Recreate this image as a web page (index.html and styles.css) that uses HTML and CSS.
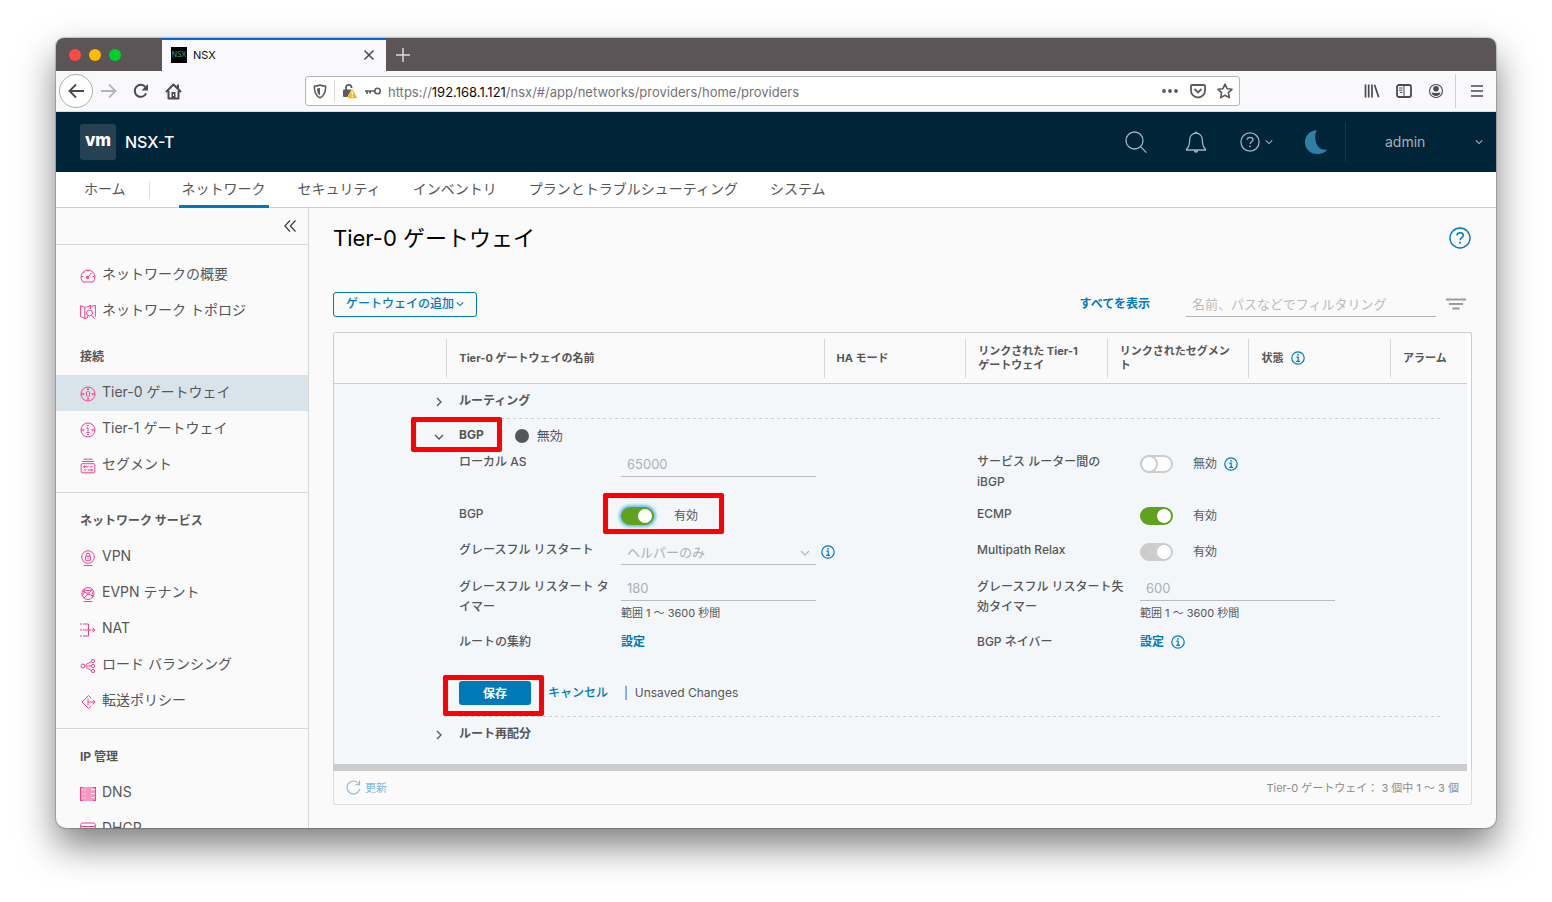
FILE: index.html
```html
<!DOCTYPE html>
<html lang="ja">
<head>
<meta charset="utf-8">
<title>NSX</title>
<meta name="viewport" content="width=device-width, initial-scale=1">
<link rel="stylesheet" href="styles.css">
</head>
<body>
<svg class="defs" width="0" height="0" aria-hidden="true">
  <symbol id="chev-down" viewBox="0 0 10 10"><path d="M1 3l4 4 4-4" fill="none" stroke="currentColor" stroke-width="1.3"/></symbol>
  <symbol id="chev-right" viewBox="0 0 10 10"><path d="M3 1l4 4-4 4" fill="none" stroke="currentColor" stroke-width="1.3"/></symbol>
  <symbol id="info" viewBox="0 0 14 14"><g fill="none" stroke="currentColor" stroke-width="1.2"><circle cx="7" cy="7" r="6.2"/><path d="M5.4 6.2h1.8v4M5.2 10.4h3.8"/></g><circle cx="7" cy="3.8" r=".9" fill="currentColor"/></symbol>
  <symbol id="question" viewBox="0 0 22 22"><g fill="none" stroke="currentColor" stroke-width="1.4"><circle cx="11" cy="11" r="10"/><path d="M7.8 8.4c.2-1.6 1.5-2.6 3.3-2.6 1.9 0 3.2 1.1 3.2 2.6 0 2.2-3.2 2.3-3.2 4.8"/></g><circle cx="11" cy="15.8" r="1" fill="currentColor"/></symbol>
</svg>

<div class="window">
  <div class="titlebar">
    <div class="lights"><i class="light red"></i><i class="light yellow"></i><i class="light green"></i></div>
    <div class="browser-tab">
      <span class="favicon">NSX</span>
      <span class="tab-name">NSX</span>
      <button class="plain" aria-label="Close tab"><svg width="12" height="12" viewBox="0 0 12 12"><path d="M1.500 1.500l9 9M10.500 1.500l-9 9" stroke="#4a4a4f" stroke-width="1.500" fill="none"/></svg></button>
    </div>
    <button class="plain new-tab" aria-label="New tab"><svg width="14" height="14" viewBox="0 0 14 14"><path d="M7 0v14M0 7h14" stroke="#dcdadb" stroke-width="1.500"/></svg></button>
  </div>

  <div class="toolbar">
    <button class="plain back" aria-label="Back"><svg width="18" height="16" viewBox="0 0 18 16"><path d="M9 1.500L2.500 8 9 14.500M2.500 8H17" fill="none" stroke="#4a4a4f" stroke-width="1.800"/></svg></button>
    <button class="plain nav-btn" aria-label="Forward"><svg width="18" height="16" viewBox="0 0 18 16"><path d="M9 1.500l6.500 6.500L9 14.500M15.500 8H1" fill="none" stroke="#b5b5b8" stroke-width="1.800"/></svg></button>
    <button class="plain nav-btn" aria-label="Reload"><svg width="18" height="16" viewBox="0 0 18 16"><path d="M14.200 10.400A6 6 0 1 1 13.400 4" fill="none" stroke="#4a4a4f" stroke-width="2"/><path d="M16 1v6.500H9.500z" fill="#4a4a4f"/></svg></button>
    <button class="plain nav-btn" aria-label="Home"><svg width="17" height="17" viewBox="0 0 17 17"><g fill="none" stroke="#4a4a4f" stroke-width="2" stroke-linejoin="round"><path d="M1 9l7.500-7.500L16 9M3.500 8v7.500h10V8"/></g><path d="M6.500 9h4v6.500h-4z" fill="#4a4a4f"/><path d="M12 1.500h2V6l-2-2z" fill="#4a4a4f"/><path d="M8 11h1v2H8z" fill="#fff"/></svg></button>
    <div class="urlbar">
      <span class="shield"><svg width="14" height="15" viewBox="0 0 14 15"><path d="M7 1C5 2 3 2.200 1.300 2.200c0 5.500 1 9.500 5.700 11.500 4.700-2 5.700-6 5.700-11.500C11 2.200 9 2 7 1z" fill="none" stroke="#5b5b5f" stroke-width="1.500"/><path d="M7 4v7.500C4.700 10 4 8 3.900 4.600z" fill="#5b5b5f"/></svg></span>
      <svg width="16" height="16" viewBox="0 0 16 16"><path d="M4 8V4.500a2.800 2.800 0 0 1 5.500-.5v1" fill="none" stroke="#5b5b5f" stroke-width="1.800"/><rect x="1" y="6.500" width="9" height="7.500" rx="1" fill="#5b5b5f"/><path d="M10.300 5.600l4.900 8.900a.6.6 0 0 1-.5.900H5.900a.6.6 0 0 1-.5-.9z" fill="#ffb000" stroke="#fff" stroke-width=".6"/><path d="M10.300 8.500v3.200M10.300 12.600v1.400" stroke="#fff" stroke-width="1.300"/></svg>
      <svg width="16" height="10" viewBox="0 0 16 10"><circle cx="12.500" cy="5" r="2.700" fill="none" stroke="#5b5b5f" stroke-width="1.600"/><path d="M0 5h9.500M2 5v3M5 5v2.600" stroke="#5b5b5f" stroke-width="1.700" fill="none"/></svg>
      <span class="url">https://<b>192.168.1.121</b>/nsx/#/app/networks/providers/home/providers</span>
      <svg width="18" height="16" viewBox="0 0 18 16" fill="#5b5b5f"><circle cx="3" cy="8" r="1.900"/><circle cx="9" cy="8" r="1.900"/><circle cx="15" cy="8" r="1.900"/></svg>
      <svg width="16" height="16" viewBox="0 0 16 16" fill="none" stroke="#5b5b5f" stroke-width="1.800"><path d="M2 2h12a1 1 0 0 1 1 1v4.500a7 7 0 0 1-14 0V3a1 1 0 0 1 1-1z"/><path d="M4.500 6L8 9.500 11.500 6"/></svg>
      <svg width="16" height="16" viewBox="0 0 16 16" fill="none" stroke="#5b5b5f" stroke-width="1.600" stroke-linejoin="round"><path d="M8 1.200l2.100 4.500 4.900.6-3.600 3.400.9 4.900L8 12.200l-4.300 2.400.9-4.900L1 6.300l4.900-.6z"/></svg>
    </div>
    <div class="chrome-tools">
      <button class="plain" aria-label="Library"><svg width="16" height="16" viewBox="0 0 16 16"><path d="M1.500 1.500v13M4.700 1.500v13M8 1.500v13M10.500 1.800l4.200 12.500" fill="none" stroke="#4a4a4f" stroke-width="1.700"/></svg></button>
      <button class="plain" aria-label="Sidebar"><svg width="16" height="16" viewBox="0 0 16 16"><rect x="1" y="2" width="14" height="12" rx="2" fill="none" stroke="#4a4a4f" stroke-width="1.800"/><path d="M8 2v12M3 5h3.500M3 7.200h3.500M4 9.400h2.500" stroke="#4a4a4f" fill="none"/></svg></button>
      <button class="plain" aria-label="Account"><svg width="16" height="16" viewBox="0 0 16 16"><circle cx="8" cy="8" r="6.500" fill="none" stroke="#4a4a4f" stroke-width="1.100"/><circle cx="8" cy="5.800" r="2.800" fill="#4a4a4f"/><path d="M3.500 9.200c1.500 1 7.500 1 9 0-.3 2.500-2.300 3.800-4.500 3.800s-4.200-1.300-4.500-3.800z" fill="#4a4a4f"/></svg></button>
    </div>
    <button class="plain menu-btn" aria-label="Menu"><svg width="12" height="12" viewBox="0 0 12 12"><path d="M0 1h12M0 6h12M0 11h12" stroke="#4a4a4f" stroke-width="1.600"/></svg></button>
  </div>

  <header class="app-header">
    <span class="vm-logo">vm</span>
    <span class="product">NSX-T</span>
    <div class="header-actions">
      <button class="plain" aria-label="検索"><svg width="24" height="24" viewBox="0 0 24 24" fill="none" stroke="currentColor" stroke-width="1.300"><circle cx="10.500" cy="10.500" r="8.500"/><path d="M16.600 16.600l5.800 6"/></svg></button>
      <button class="plain" aria-label="通知"><svg width="22" height="24" viewBox="0 0 22 24"><path d="M11 3.200c-3.800 0-6.300 2.900-6.300 6.300 0 4.500-.8 7.500-3.200 9.800v.7h19v-.7c-2.400-2.300-3.200-5.300-3.200-9.800 0-3.400-2.500-6.300-6.300-6.300z" fill="none" stroke="currentColor" stroke-width="1.300"/><path d="M9.500 3a1.500 1.500 0 0 1 3 0M8.800 20.500a2.200 2.200 0 0 0 4.400 0z" fill="currentColor"/></svg></button>
      <button class="plain help" aria-label="ヘルプ"><svg width="20" height="20"><use href="#question"/></svg><svg width="8" height="8"><use href="#chev-down"/></svg></button>
      <button class="plain" aria-label="ダーク モード"><svg width="24" height="24" viewBox="0 0 24 24"><path d="M12.800.1C6 .6 1 5.700 1 12.200 1 18.800 6.200 24 13 24c4.400 0 8.300-1.500 10.300-4.500-3.500.7-7-.3-9.300-3.300C10.800 12 10.400 5 12.800.1z" fill="#2e7fa3"/></svg></button>
      <button class="plain user">admin<svg width="8" height="8"><use href="#chev-down"/></svg></button>
    </div>
  </header>

  <nav class="main-tabs" aria-label="メイン">
    <a href="#" class="home">ホーム</a>
    <a href="#" class="active">ネットワーク</a>
    <a href="#">セキュリティ</a>
    <a href="#">インベントリ</a>
    <a href="#">プランとトラブルシューティング</a>
    <a href="#">システム</a>
  </nav>

  <div class="workspace">
    <aside class="sidebar">
      <div class="collapse"><button class="plain" aria-label="折りたたむ"><svg width="12" height="12" viewBox="0 0 12 12"><path d="M6 .5L.8 6 6 11.500M11.500.5L6.300 6l5.200 5.500" fill="none" stroke="#333" stroke-width="1.100"/></svg></button></div>
      <div class="group top">
        <a href="#"><svg viewBox="0 0 16 16"><path d="M3 14a7 7 0 1 1 10 0zM8 2v1.800M1.500 8.500h1.800M12.700 8.500h1.800M3.400 4l1 1"/><path d="M7.500 9.500l4-4.500"/><circle cx="7.600" cy="9.400" r="1.200" class="solid"/></svg>ネットワークの概要</a>
        <a href="#"><svg viewBox="0 0 16 16"><path d="M.6 1.500l4.200 2v11l-4.200-2zM4.800 3.500L6 2.500M10.500 1.500l-4 1.500M10.500 1.500l1.500.8 3.400-1v11.500M10.500 1.500V5M4.800 14.500L8 13.500"/><circle cx="9.500" cy="9" r="3"/><path d="M11.600 11.300l3 3.500M7 12.500l2-1.500"/></svg>ネットワーク トポロジ</a>
      </div>
      <div class="group">
        <h2>接続</h2>
        <a href="#" class="current"><svg viewBox="0 0 16 16"><circle cx="8" cy="8" r="7"/><rect x="6.400" y="5.600" width="3.200" height="4.800" rx="1"/><path d="M6.800 2.800L8 4l1.200-1.200M6.800 13.200L8 12l1.200 1.200M3 6.800L4.200 8 3 9.200M13 6.800L11.800 8 13 9.200M1 8h3M12 8h3M8 1.500V4M8 12v2.500"/></svg>Tier-0 ゲートウェイ</a>
        <a href="#"><svg viewBox="0 0 16 16"><circle cx="8" cy="8" r="7"/><path d="M6.600 6.500L8 5.600v5M6.500 10.600h3M6.800 2.800L8 4l1.200-1.200M6.800 13.200L8 12l1.200 1.200M3 6.800L4.200 8 3 9.200M13 6.800L11.800 8 13 9.200M1 8h3M12 8h3"/></svg>Tier-1 ゲートウェイ</a>
        <a href="#"><svg viewBox="0 0 16 16"><path d="M3.500 1.200h9M2 3.500h12"/><rect x="1.200" y="5.700" width="13.600" height="9.100" rx="1"/><path d="M3.500 8.700h5M5.200 7.300L3.600 8.700l1.600 1.400M10 8.700h2.500M7.500 12h5M10.900 10.600l1.600 1.400-1.600 1.400M3.500 12H6"/></svg>セグメント</a>
      </div>
      <div class="group">
        <h2>ネットワーク サービス</h2>
        <a href="#"><svg viewBox="0 0 16 16"><circle cx="8" cy="7" r="6.300"/><rect x="5.500" y="6.300" width="5" height="4" rx=".5"/><path d="M6.300 6V4.800a1.700 1.700 0 0 1 3.400 0V6M8 7.500v1.500M3.500 15.500h9"/></svg>VPN</a>
        <a href="#"><svg viewBox="0 0 16 16"><circle cx="8" cy="7.500" r="6"/><circle cx="8" cy="7.800" r="1"/><path d="M2.500 5l4.800 2.300M8.800 7L12.500 3.500M7.500 8.700L4 12M8.800 8.300l4.500 1.900M4 3.500c2 1.600 6 1.600 8 0M4 3.500c.6 3-.5 5-1.500 6M13.500 5c-1.700 2-1.500 5-1 7M3.500 15.500h9"/></svg>EVPN テナント</a>
        <a href="#"><svg viewBox="0 0 16 16"><path d="M0 2h2M3 2h5.500v12H3M2 14H0M0 8h2M3 8h12M12.500 5.800L15 8l-2.500 2.200"/></svg>NAT</a>
        <a href="#"><svg viewBox="0 0 16 16"><circle cx="3" cy="8" r="2"/><circle cx="13" cy="3" r="1.600"/><circle cx="13" cy="8" r="1.600"/><circle cx="13" cy="13" r="1.600"/><path d="M5 8h6M6 6.500L11.500 3.500M6 9.500l5.500 3"/></svg>ロード バランシング</a>
        <a href="#"><svg viewBox="0 0 16 16"><path d="M11 4L8.500 1.500 2 8l6.500 6.500L11 12M8 4.500v7M8 8h7M12.700 5.600L15.200 8l-2.500 2.400"/></svg>転送ポリシー</a>
      </div>
      <div class="group">
        <h2>IP 管理</h2>
        <a href="#"><svg viewBox="0 0 16 16"><path d="M0 1h16v14H0z" class="tint"/><path d="M.5 1v14M15.500 1v14M0 1.500h3M13 1.500h3M0 14.500h3M13 14.500h3"/><path d="M2 4h1M2 8h1M2 12h1M4.500 4h1M4.500 8h1M4.500 12h1M11 3.500h4M11 7.500h4M11 11.500h4" class="gap"/></svg>DNS</a>
        <a href="#"><svg viewBox="0 0 16 16"><rect x=".7" y="1" width="14.600" height="13.500" rx="2"/><path d="M1 4.500h14M3.500 7h8M3.500 10h8"/></svg>DHCP</a>
      </div>
    </aside>

    <main class="content">
      <div class="page-head">
        <h1>Tier-0 ゲートウェイ</h1>
        <button class="plain page-help" aria-label="ヘルプ"><svg width="22" height="22"><use href="#question"/></svg></button>
      </div>

      <div class="actions">
        <button class="add-btn">ゲートウェイの追加<svg width="8" height="8"><use href="#chev-down"/></svg></button>
        <a href="#" class="show-all">すべてを表示</a>
        <input class="filter" type="text" aria-label="フィルタ" placeholder="名前、パスなどでフィルタリング">
        <button class="plain" aria-label="フィルタ オプション"><svg width="22" height="12" viewBox="0 0 22 12"><path d="M1 1.500h20M4 6h14M7.500 10.500h7" stroke="#9a9a9a" stroke-width="1.800"/></svg></button>
      </div>

      <div class="grid-panel">
        <div class="grid-scroll">
          <table>
            <colgroup><col class="c-exp"><col class="c-name"><col class="c-std"><col class="c-std"><col class="c-std"><col class="c-std"><col></colgroup>
            <thead>
              <tr>
                <th aria-label="展開"></th>
                <th>Tier-0 ゲートウェイの名前</th>
                <th>HA モード</th>
                <th>リンクされた Tier-1<br>ゲートウェイ</th>
                <th>リンクされたセグメント</th>
                <th><span class="with-icon">状態<svg class="blue" width="14" height="14"><use href="#info"/></svg></span></th>
                <th>アラーム</th>
              </tr>
            </thead>
            <tbody>
              <tr><td colspan="7">
                <section class="sect">
                  <button class="plain chev" aria-label="ルーティングを展開"><svg width="10" height="10"><use href="#chev-right"/></svg></button>
                  <div class="sect-body ruled"><h3>ルーティング</h3></div>
                </section>

                <section class="sect">
                  <button class="plain chev" aria-label="BGP を折りたたむ"><svg width="10" height="10"><use href="#chev-down"/></svg></button>
                  <span class="mark mark-bgp"></span>
                  <div class="sect-body ruled">
                    <div class="sect-title"><h3>BGP</h3><i class="dot"></i><span>無効</span></div>
                    <form class="fields">
                      <label for="local-as">ローカル AS</label>
                      <div class="ctl"><input id="local-as" class="line" type="text" value="65000" disabled></div>
                      <label for="ibgp">サービス ルーター間の iBGP</label>
                      <div class="ctl"><input id="ibgp" class="switch" type="checkbox"><span>無効</span><svg class="blue" width="14" height="14"><use href="#info"/></svg></div>

                      <label for="bgp">BGP</label>
                      <div class="ctl"><span class="mark mark-toggle"></span><input id="bgp" class="switch focused" type="checkbox" checked><span>有効</span></div>
                      <label for="ecmp">ECMP</label>
                      <div class="ctl"><input id="ecmp" class="switch" type="checkbox" checked><span>有効</span></div>

                      <label for="restart">グレースフル リスタート</label>
                      <div class="ctl"><span class="select-wrap"><select id="restart" class="line" disabled><option>ヘルパーのみ</option></select><svg width="10" height="10"><use href="#chev-down"/></svg></span><svg class="blue" width="14" height="14"><use href="#info"/></svg></div>
                      <label for="relax">Multipath Relax</label>
                      <div class="ctl"><input id="relax" class="switch" type="checkbox" checked disabled><span>有効</span></div>

                      <label for="timer">グレースフル リスタート タイマー</label>
                      <div class="ctl stack"><input id="timer" class="line" type="text" value="180" disabled><small>範囲 1 ～ 3600 秒間</small></div>
                      <label for="stale">グレースフル リスタート失効タイマー</label>
                      <div class="ctl stack"><input id="stale" class="line" type="text" value="600" disabled><small>範囲 1 ～ 3600 秒間</small></div>

                      <span class="lbl">ルートの集約</span>
                      <div class="ctl short"><a href="#">設定</a></div>
                      <span class="lbl">BGP ネイバー</span>
                      <div class="ctl short"><a href="#">設定</a><svg class="blue" width="14" height="14"><use href="#info"/></svg></div>
                    </form>
                    <div class="save-row">
                      <span class="mark mark-save"></span>
                      <button class="save">保存</button>
                      <button class="plain cancel">キャンセル</button>
                      <span>|&nbsp; Unsaved Changes</span>
                    </div>
                  </div>
                </section>

                <section class="sect last">
                  <button class="plain chev" aria-label="ルート再配分を展開"><svg width="10" height="10"><use href="#chev-right"/></svg></button>
                  <div class="sect-body"><h3>ルート再配分</h3></div>
                </section>
              </td></tr>
            </tbody>
          </table>
          <div class="scrollbar"></div>
        </div>
        <footer class="grid-foot">
          <button class="plain refresh"><svg width="15" height="15" viewBox="0 0 15 15" fill="none" stroke="currentColor" stroke-width="1.100"><path d="M13.800 9.200A6.500 6.500 0 1 1 12.600 3.500M13.500.5v4.200H9.300"/></svg>更新</button>
          <span>Tier-0 ゲートウェイ： 3 個中 1 ～ 3 個</span>
        </footer>
      </div>
    </main>
  </div>
</div>
</body>
</html>
```
FILE: styles.css
```css
* { box-sizing: border-box; }

body {
  margin: 0;
  height: 100vh;
  padding: 38px 56px 74px;
  display: flex;
  background: #fff;
  color: #565656;
  font-family: Inter, "Noto Sans CJK JP", sans-serif;
  font-size: 12px;
  line-height: 20px;
}

a { color: #0079b8; text-decoration: none; }
h1, h2, h3 { margin: 0; }
svg { flex: none; display: block; }
button, input, select { font: inherit; color: inherit; }
.defs { position: absolute; }
.blue { color: #0079b8; }

.plain {
  border: 0;
  padding: 0;
  background: none;
  display: flex;
  align-items: center;
  justify-content: center;
}

/* Browser window */
.window {
  flex: 1;
  min-width: 0;
  display: flex;
  flex-direction: column;
  overflow: hidden;
  border-radius: 8px 8px 10px 10px;
  background: #fafafa;
  box-shadow: 0 0 1px 1px rgba(0, 0, 0, .2), 0 18px 36px rgba(0, 0, 0, .5);
}

.titlebar { flex: none; height: 33px; display: flex; background: #5c5557; }
.lights { width: 106px; padding-left: 13px; display: flex; align-items: center; gap: 8px; }
.light { width: 12px; height: 12px; border-radius: 50%; }
.red { background: #ff4a44; }
.yellow { background: #ffb900; }
.green { background: #00d02b; }

.browser-tab {
  width: 224px;
  padding: 0 11px 1px 9px;
  display: flex;
  align-items: center;
  gap: 6px;
  border-top: 2px solid #0a63e0;
  background: #f9f9fb;
  color: #0c0c0d;
}
.favicon {
  width: 16px;
  height: 16px;
  overflow: hidden;
  background: #000;
  color: #3f9e9a;
  font-size: 7px;
  line-height: 16px;
  text-align: center;
}
.tab-name { flex: 1; font-size: 11px; }
.new-tab { width: 34px; }

.toolbar {
  flex: none;
  height: 41px;
  padding-left: 3px;
  display: flex;
  align-items: center;
  background: #f9f9fb;
  border-bottom: 1px solid #dddde0;
}
.back { width: 34px; height: 34px; border: 1px solid #aeaeb2; border-radius: 50%; background: #fdfdfe; }
.nav-btn { width: 32px; height: 32px; }
.urlbar {
  flex: 1;
  height: 30px;
  margin: 0 124px 0 116px;
  padding: 0 6px 0 7px;
  display: flex;
  align-items: center;
  gap: 7px;
  border: 1px solid #b5b5b8;
  border-radius: 3px;
  background: #fff;
  color: #737377;
}
.shield { width: 22px; height: 22px; display: flex; align-items: center; border-right: 1px solid #d7d7db; }
.url { flex: 1; overflow: hidden; white-space: nowrap; font-size: 13px; line-height: 22px; padding-top: 1px; }
.url b { color: #0c0c0d; font-weight: 400; }
.url ~ svg + svg { margin-left: 4px; }
.chrome-tools { display: flex; gap: 16px; padding-right: 11px; }
.menu-btn { width: 41px; height: 34px; padding-left: 2px; border-left: 1px solid #cfcfd2; }

/* Application header */
.app-header {
  flex: none;
  height: 60px;
  padding-left: 24px;
  display: flex;
  align-items: center;
  background: #002538;
  color: #fff;
}
.vm-logo {
  width: 36px;
  height: 36px;
  border-radius: 3px;
  background: #254152;
  font-size: 17px;
  font-weight: 800;
  line-height: 33px;
  text-align: center;
}
.product { margin-left: 9px; font-size: 16px; font-weight: 500; }
.header-actions { margin-left: auto; display: flex; height: 40px; color: #a5b3bb; }
.header-actions .plain { width: 60px; padding-left: 2px; gap: 5px; }
.header-actions .user {
  width: 151px;
  padding: 0 13px 0 39px;
  justify-content: space-between;
  border-left: 1px solid #16394b;
  font-size: 14px;
}

.main-tabs {
  flex: none;
  height: 36px;
  padding-left: 28px;
  display: flex;
  gap: 26px;
  border-bottom: 1px solid #ccc;
  background: #fff;
  font-size: 14px;
  line-height: 34px;
}
.main-tabs a { padding: 0 3px; color: #565656; }
.main-tabs .home {
  margin-right: 3px;
  padding: 0 24px 0 0;
  background: linear-gradient(#ddd, #ddd) right center / 1px 18px no-repeat;
}
.main-tabs .active { height: 36px; border-bottom: 3px solid #0079b8; }

.workspace { flex: 1; min-height: 0; display: flex; }

/* Sidebar */
.sidebar { flex: none; width: 253px; overflow: hidden; border-right: 1px solid #d7d7d7; }
.collapse { height: 37px; padding-right: 12px; display: flex; justify-content: flex-end; border-bottom: 1px solid #d7d7d7; }
.group { padding: 10px 0 9px; border-bottom: 1px solid #d7d7d7; }
.group.top { padding: 12px 0 0; border: 0; }
.group h2 { padding-left: 24px; font-size: 12px; line-height: 36px; font-weight: 700; }
.group a {
  height: 36px;
  padding: 0 0 2px 24px;
  display: flex;
  align-items: center;
  gap: 6px;
  color: #565656;
  font-size: 14px;
}
.group .current { background: #d9e4ea; }
.group svg { width: 16px; height: 16px; margin-top: 4px; fill: none; stroke: #f0408c; stroke-width: 1; }
.group .solid { fill: #f0408c; }
.group .tint { fill: #f799c0; stroke: none; }
.group .gap { stroke: #fff; }

/* Page */
.content { flex: 1; min-width: 0; padding: 14px 24px 24px; }
.page-head { height: 32px; padding-right: 1px; display: flex; align-items: center; justify-content: space-between; }
.page-head h1 { color: #000; font-size: 22px; line-height: 32px; font-weight: 400; }
.page-help { color: #0079b8; }

.actions { margin-top: 37px; height: 26px; display: flex; align-items: center; }
.add-btn {
  height: 25px;
  padding: 0 12px;
  display: flex;
  align-items: center;
  gap: 2px;
  border: 1px solid #0079b8;
  border-radius: 3px;
  background: none;
  color: #0079b8;
  font-weight: 500;
}
.show-all { margin-left: auto; font-weight: 600; }
.filter {
  width: 250px;
  height: 26px;
  margin: 0 9px 0 36px;
  padding: 0 6px;
  border: 0;
  border-bottom: 1px solid #b3b3b3;
  background: none;
  font-size: 13px;
}
.filter::placeholder { color: #bcbcbc; }
.actions .plain { margin-right: 5px; }

/* Data grid */
.grid-panel { margin-top: 15px; }
.grid-scroll { padding-right: 4px; border: 1px solid #ccc; border-radius: 3px 3px 0 0; background: #fff; border-bottom-width: 0; }
table { width: 100%; table-layout: fixed; border-collapse: separate; border-spacing: 0; }
.c-exp { width: 10%; }
.c-name { width: 33.3%; }
.c-std { width: 12.5%; }
th {
  position: relative;
  height: 51px;
  padding: 0 12px;
  border-bottom: 1px solid #ccc;
  background: #fafafa;
  font-size: 11px;
  line-height: 14px;
  text-align: left;
}
th + th::before { content: ""; position: absolute; left: -1px; top: 6px; bottom: 5px; width: 1px; background: #d7d7d7; }
.with-icon { display: flex; align-items: center; gap: 8px; }
td { padding: 0; background: #f3f7fa; }
.scrollbar { height: 7px; background: #ccc; }

.sect { position: relative; padding: 0 24px 0 100px; display: grid; grid-template-columns: 25px 1fr; align-items: start; }
.chev { height: 35px; justify-content: flex-start; color: #485969; }
.ruled {
  padding-bottom: 1px;
  background: repeating-linear-gradient(90deg, #ccd0d3 0 3px, transparent 3px 6px) left bottom / 100% 1px no-repeat;
}
.sect h3 { font-size: 12px; line-height: 34px; font-weight: 700; }
.last { padding-bottom: 12px; }
.sect-title { display: flex; align-items: center; font-size: 13px; height: 32px; line-height: 34px; }
.dot { width: 14px; height: 14px; margin: 2px 8px 0 31px; border-radius: 50%; background: #565656; }

.fields { display: grid; grid-template-columns: 162px 356fr 163px 303fr; grid-template-rows: 52px 36px 37px 55px 24px; }
.fields label, .lbl { padding: 1px 10px 0 0; font-weight: 500; }
.ctl { position: relative; height: 26px; display: flex; align-items: center; }
.ctl span + .blue, .ctl a + .blue { margin-left: 7px; }
.ctl .select-wrap + .blue { margin-left: 5px; }
.ctl.short { height: 22px; }
.ctl a { font-weight: 600; }
.ctl.stack { flex-direction: column; align-items: flex-start; height: auto; }
.stack small { margin-top: 2px; font-size: 11px; line-height: 20px; }
.line {
  width: 195px;
  height: 25px;
  padding: 0 6px;
  border: 0;
  border-bottom: 1px solid #b8bcbf;
  border-radius: 0;
  background: none;
  color: #adb0b2;
  font-size: 13px;
  opacity: 1;
  appearance: none;
}
.select-wrap { position: relative; display: flex; color: #b8bcbf; }
.select-wrap svg { position: absolute; right: 6px; top: 8px; }

.switch {
  position: relative;
  width: 33px;
  height: 18px;
  margin: 0 20px 0 0;
  appearance: none;
  border: 2px solid #ccc;
  border-radius: 9px;
  background: #fff;
}
.switch::before {
  content: "";
  position: absolute;
  left: 0;
  top: 0;
  width: 14px;
  height: 14px;
  border-radius: 50%;
  background: #fff;
  box-shadow: 0 0 0 2px #ccc;
}
.switch:checked { border-color: #60a11f; background: #60a11f; }
.switch:checked::before { left: 15px; box-shadow: none; }
.switch:disabled { border-color: #ccc; background: #ccc; }
.switch.focused { box-shadow: 0 0 3px 2px #6cc0ea; }

.save-row { position: relative; height: 61px; padding-top: 26px; display: flex; align-items: flex-start; line-height: 24px; }
.save { width: 72px; height: 24px; border: 0; border-radius: 3px; background: #0079b8; color: #fff; font-weight: 600; }
.cancel { width: 60px; height: 24px; margin: 0 16px 0 17px; color: #0079b8; font-weight: 500; }

/* Highlight frames over the controls */
.mark { position: absolute; border: 5px solid #f00; border-radius: 2px; pointer-events: none; }
.mark-bgp { left: 77px; top: -2px; width: 91px; height: 35px; }
.mark-toggle { left: -18px; top: -10px; width: 121px; height: 41px; }
.mark-save { left: -16px; top: 20px; width: 101px; height: 41px; }

.grid-foot {
  height: 34px;
  padding: 0 12px;
  display: flex;
  align-items: center;
  justify-content: space-between;
  border: 1px solid #ddd;
  border-top: 0;
  border-radius: 0 0 3px 3px;
  color: #8c8c8c;
  font-size: 11px;
}
.refresh { gap: 4px; color: #7fbbdb; }
```
